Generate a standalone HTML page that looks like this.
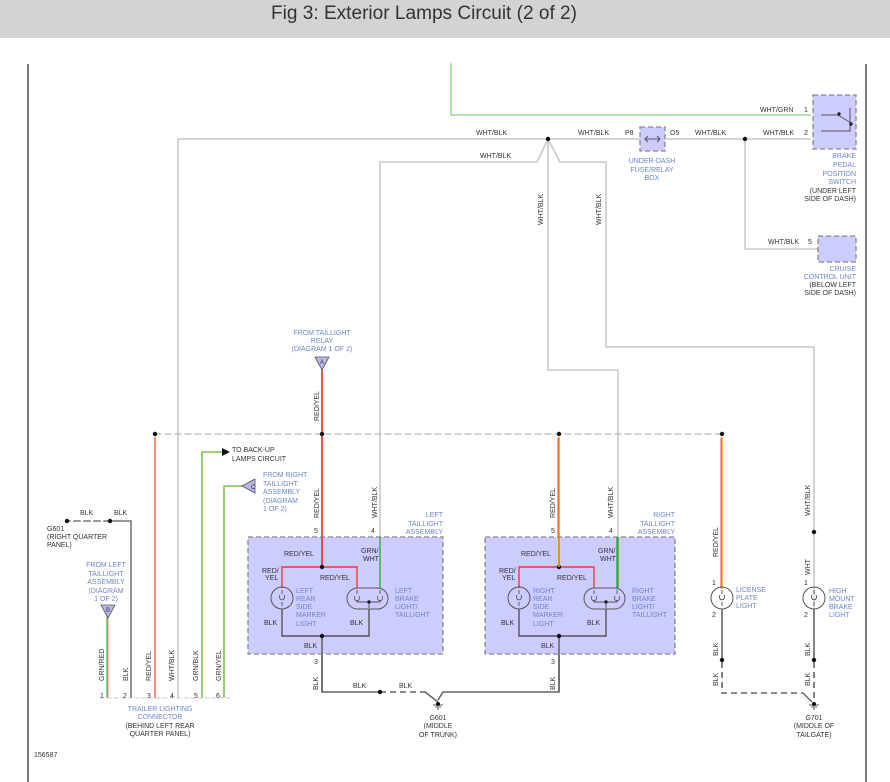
<!DOCTYPE html>
<html><head><meta charset="utf-8"><style>
html,body{margin:0;padding:0;background:#fff;width:890px;height:782px;overflow:hidden}
svg text{font-family:"Liberation Sans",sans-serif;font-size:7px}
.k{fill:#333}.b{fill:#6d86c9}
</style></head><body>
<svg width="890" height="782" viewBox="0 0 890 782" xmlns="http://www.w3.org/2000/svg">
<rect x="0" y="0" width="890" height="38" fill="#d3d3d3"/>
<text x="424" y="19" text-anchor="middle" style="font-size:19px" fill="#333" textLength="306" lengthAdjust="spacingAndGlyphs">Fig 3: Exterior Lamps Circuit (2 of 2)</text>
<line x1="28" y1="64" x2="28" y2="782" stroke="#222" stroke-width="1.2"/>
<line x1="866" y1="64" x2="866" y2="782" stroke="#222" stroke-width="1.2"/>

<g fill="none" stroke-linecap="square">
<g stroke="#c8c8c8" stroke-width="1.6">
<polyline points="178,697 178,139 810,139"/>
<polyline points="380,537 380,162 537,162 548,139 560,162 606,162 606,347 814,347 814,590"/>
<polyline points="548,139 548,370 618,370 618,537"/>
<polyline points="745,139 745,249 818,249"/>
</g>
<polyline points="451,64 451,115 810,115" stroke="#a5d890" stroke-width="1.6"/>
<line x1="155" y1="434" x2="722" y2="434" stroke="#aaa" stroke-width="1" stroke-dasharray="6,4"/>
<line x1="155" y1="438" x2="155" y2="697" stroke="#ff6a50" stroke-width="1.6"/>
<line x1="322" y1="370" x2="322" y2="537" stroke="#f22" stroke-width="1.6"/>
<line x1="559" y1="438" x2="559" y2="537" stroke="#e8a000" stroke-width="1.6"/>
<line x1="558" y1="438" x2="558" y2="537" stroke="#e22" stroke-width="0.8"/>
<line x1="722" y1="438" x2="722" y2="588" stroke="#f0b000" stroke-width="1.6"/>
<line x1="721" y1="438" x2="721" y2="588" stroke="#e22" stroke-width="0.8"/>
<polyline points="202,697 202,452 222,452" stroke="#7bc44a" stroke-width="1.6"/>
<polyline points="224,697 224,486 242,486" stroke="#7bc44a" stroke-width="1.6"/>
<line x1="107" y1="618" x2="107" y2="697" stroke="#6c6" stroke-width="1.6"/>
<line x1="108" y1="618" x2="108" y2="697" stroke="#e66" stroke-width="0.8"/>
<polyline points="131,697 131,521 110,521" stroke="#777" stroke-width="1.6"/>
<line x1="110" y1="521" x2="68" y2="521" stroke="#777" stroke-width="1.6" stroke-dasharray="6,4"/>
<line x1="100" y1="698" x2="232" y2="698" stroke="#bbb" stroke-width="0.8" stroke-dasharray="4,3"/>
<line x1="814" y1="590" x2="814" y2="612" stroke="#ddd" stroke-width="1.6"/>
</g>

<g fill="#ccccff" stroke="#888" stroke-width="1.3" stroke-dasharray="5,3">
<rect x="248" y="537" width="195" height="117"/>
<rect x="485" y="537" width="190" height="117"/>
<rect x="813" y="95" width="43" height="54"/>
<rect x="818" y="236" width="38" height="26"/>
<rect x="640" y="127" width="25" height="24"/>
</g>
<g fill="none" stroke="#555" stroke-width="1">
<polyline points="645,139 660,139"/><polyline points="648,136 645,139 648,142"/><polyline points="657,136 660,139 657,142"/>
<polyline points="850,108 850,131 821,131"/>
<polyline points="821,115 838,115 851,123"/>
</g>
<circle cx="839" cy="114" r="1.7" fill="#222"/><circle cx="851" cy="124" r="1.7" fill="#222"/>

<g id="L">
<polyline points="282,588 282,567 357,567 357,588" fill="none" stroke="#f33" stroke-width="1.4"/>
<line x1="322" y1="537" x2="322" y2="567" stroke="#f22" stroke-width="1.6"/>
<line x1="380" y1="537" x2="380" y2="588" stroke="#3a3" stroke-width="1.4"/>
<polyline points="282,609 282,636 369,636 369,609" fill="none" stroke="#555" stroke-width="1.4"/>
<line x1="322" y1="636" x2="322" y2="692" stroke="#666" stroke-width="1.6"/>
<circle cx="282" cy="598" r="11" fill="none" stroke="#555" stroke-width="1"/>
<path d="M282 590 v4 m0 8 v4 M280 595 a2.5 3 0 1 0 4 0" fill="none" stroke="#555" stroke-width="0.9"/>
<rect x="347" y="588" width="41" height="21" rx="10.5" fill="none" stroke="#555" stroke-width="1"/>
<path d="M357 590 v4 M380 590 v4 M355 596 a2.5 3 0 1 0 4 0 M378 596 a2.5 3 0 1 0 4 0 M357 600 v2 h23 v-2 M369 602 v6" fill="none" stroke="#555" stroke-width="0.9"/>
<circle cx="369" cy="602" r="1.7" fill="#222"/>
<circle cx="322" cy="567" r="2.2" fill="#111"/><circle cx="322" cy="636" r="2.2" fill="#111"/>
</g>
<use href="#L" transform="translate(237,0)"/>
<line x1="618" y1="537" x2="618" y2="588" stroke="#3a3" stroke-width="1.4"/>
<line x1="559" y1="537" x2="559" y2="567" stroke="#e8a000" stroke-width="1.6"/>

<g fill="none" stroke="#666" stroke-width="1.6">
<polyline points="322,655 322,692 380,692"/>
<polyline points="559,655 559,692 443,692 438,700"/>
<line x1="425" y1="692" x2="438" y2="702"/>
<line x1="722" y1="609" x2="722" y2="660"/>
<line x1="814" y1="609" x2="814" y2="660"/>
</g>
<g fill="none" stroke="#666" stroke-width="1.6" stroke-dasharray="6,4">
<line x1="380" y1="692" x2="428" y2="692"/>
<polyline points="722,662 722,693 803,693"/>
<line x1="814" y1="662" x2="814" y2="700"/>
</g>
<line x1="803" y1="693" x2="812" y2="702" stroke="#666" stroke-width="1.4"/>
<g stroke="#555" stroke-width="1">
<path d="M433 705h10M435 707h6M437 709h2"/><path d="M809 705h10M811 707h6M813 709h2"/>
</g>
<circle cx="438" cy="704" r="2" fill="#111"/><circle cx="814" cy="704" r="2" fill="#111"/>
<g fill="none" stroke="#555" stroke-width="1">
<circle cx="722" cy="598" r="11"/><circle cx="814" cy="598" r="11"/>
<path d="M722 590v4m0 8v4M720 595a2.5 3 0 1 0 4 0M814 590v4m0 8v4M812 595a2.5 3 0 1 0 4 0"/>
</g>
<g fill="#111">
<circle cx="548" cy="139" r="2.2"/><circle cx="745" cy="139" r="2.2"/>
<circle cx="155" cy="434" r="2.2"/><circle cx="322" cy="434" r="2.2"/><circle cx="559" cy="434" r="2.2"/><circle cx="722" cy="434" r="2.2"/>
<circle cx="814" cy="532" r="2.2"/><circle cx="722" cy="660" r="2.2"/><circle cx="814" cy="660" r="2.2"/>
<circle cx="380" cy="692" r="2.2"/><circle cx="110" cy="521" r="2.2"/><circle cx="67" cy="521" r="2.2"/>
<path d="M222 448 l8 4 -8 4z"/>
</g>
<g fill="#b8b8f0" stroke="#555" stroke-width="0.8">
<path d="M315 357h14l-7 13z"/><path d="M101 605h14l-7 13z"/><path d="M242 486l13-7v14z"/>
</g>
<text x="322" y="364" text-anchor="middle" class="k" style="font-size:6px">A</text>
<text x="108" y="612" text-anchor="middle" class="k" style="font-size:6px">B</text>
<text x="253" y="489" text-anchor="middle" class="k" style="font-size:6px">C</text>

<g class="k">
<text x="476" y="135">WHT/BLK</text><text x="480" y="158">WHT/BLK</text><text x="578" y="135">WHT/BLK</text>
<text x="625" y="135">P8</text><text x="670" y="135">O5</text><text x="695" y="135">WHT/BLK</text>
<text x="763" y="135">WHT/BLK</text><text x="804" y="135">2</text>
<text x="760" y="112">WHT/GRN</text><text x="804" y="112">1</text>
<text x="768" y="244">WHT/BLK</text><text x="808" y="244">5</text>
<text x="856" y="193" text-anchor="end">(UNDER LEFT</text><text x="856" y="201" text-anchor="end">SIDE OF DASH)</text>
<text x="856" y="287" text-anchor="end">(BELOW LEFT</text><text x="856" y="295" text-anchor="end">SIDE OF DASH)</text>
<text x="232" y="452">TO BACK-UP</text><text x="232" y="461">LAMPS CIRCUIT</text>
<text x="80" y="515">BLK</text><text x="114" y="515">BLK</text>
<text x="47" y="531">G601</text><text x="47" y="539">(RIGHT QUARTER</text><text x="47" y="547">PANEL)</text>
<text x="284" y="556">RED/YEL</text><text x="262" y="573">RED/</text><text x="265" y="580">YEL</text><text x="320" y="580">RED/YEL</text>
<text x="361" y="553">GRN/</text><text x="363" y="561">WHT</text>
<text x="264" y="625">BLK</text><text x="350" y="625">BLK</text><text x="304" y="648">BLK</text>
<text x="521" y="556">RED/YEL</text><text x="499" y="573">RED/</text><text x="502" y="580">YEL</text><text x="557" y="580">RED/YEL</text>
<text x="598" y="553">GRN/</text><text x="600" y="561">WHT</text>
<text x="501" y="625">BLK</text><text x="587" y="625">BLK</text><text x="541" y="648">BLK</text>
<text x="314" y="533">5</text><text x="371" y="533">4</text><text x="551" y="533">5</text><text x="609" y="533">4</text>
<text x="314" y="664">3</text><text x="551" y="664">3</text>
<text x="353" y="688">BLK</text><text x="399" y="688">BLK</text>
<text x="438" y="720" text-anchor="middle">G601</text><text x="438" y="728" text-anchor="middle">(MIDDLE</text><text x="438" y="737" text-anchor="middle">OF TRUNK)</text>
<text x="814" y="720" text-anchor="middle">G701</text><text x="814" y="728" text-anchor="middle">(MIDDLE OF</text><text x="814" y="737" text-anchor="middle">TAILGATE)</text>
<text x="712" y="585">1</text><text x="712" y="617">2</text><text x="804" y="585">1</text><text x="804" y="617">2</text>
<text x="100" y="698">1</text><text x="123" y="698">2</text><text x="147" y="698">3</text><text x="170" y="698">4</text><text x="194" y="698">5</text><text x="216" y="698">6</text>
<text x="160" y="728" text-anchor="middle">(BEHIND LEFT REAR</text><text x="160" y="736" text-anchor="middle">QUARTER PANEL)</text>
<text x="34" y="757">156587</text>
</g>
<g class="b">
<text x="652" y="163" text-anchor="middle">UNDER-DASH</text><text x="652" y="172" text-anchor="middle">FUSE/RELAY</text><text x="652" y="180" text-anchor="middle">BOX</text>
<text x="856" y="158" text-anchor="end">BRAKE</text><text x="856" y="167" text-anchor="end">PEDAL</text><text x="856" y="176" text-anchor="end">POSITION</text><text x="856" y="184" text-anchor="end">SWITCH</text>
<text x="856" y="271" text-anchor="end">CRUISE</text><text x="856" y="279" text-anchor="end">CONTROL UNIT</text>
<text x="322" y="335" text-anchor="middle">FROM TAILLIGHT</text><text x="322" y="343" text-anchor="middle">RELAY</text><text x="322" y="351" text-anchor="middle">(DIAGRAM 1 OF 2)</text>
<text x="263" y="477">FROM RIGHT</text><text x="263" y="486">TAILLIGHT</text><text x="263" y="494">ASSEMBLY</text><text x="263" y="503">(DIAGRAM</text><text x="263" y="511">1 OF 2)</text>
<text x="106" y="567" text-anchor="middle">FROM LEFT</text><text x="106" y="576" text-anchor="middle">TAILLIGHT</text><text x="106" y="584" text-anchor="middle">ASSEMBLY</text><text x="106" y="593" text-anchor="middle">(DIAGRAM</text><text x="106" y="601" text-anchor="middle">1 OF 2)</text>
<text x="443" y="517" text-anchor="end">LEFT</text><text x="443" y="526" text-anchor="end">TAILLIGHT</text><text x="443" y="534" text-anchor="end">ASSEMBLY</text>
<text x="675" y="517" text-anchor="end">RIGHT</text><text x="675" y="526" text-anchor="end">TAILLIGHT</text><text x="675" y="534" text-anchor="end">ASSEMBLY</text>
<text x="296" y="593">LEFT</text><text x="296" y="601">REAR</text><text x="296" y="609">SIDE</text><text x="296" y="617">MARKER</text><text x="296" y="626">LIGHT</text>
<text x="395" y="593">LEFT</text><text x="395" y="601">BRAKE</text><text x="395" y="609">LIGHT/</text><text x="395" y="617">TAILLIGHT</text>
<text x="533" y="593">RIGHT</text><text x="533" y="601">REAR</text><text x="533" y="609">SIDE</text><text x="533" y="617">MARKER</text><text x="533" y="626">LIGHT</text>
<text x="632" y="593">RIGHT</text><text x="632" y="601">BRAKE</text><text x="632" y="609">LIGHT/</text><text x="632" y="617">TAILLIGHT</text>
<text x="736" y="592">LICENSE</text><text x="736" y="600">PLATE</text><text x="736" y="608">LIGHT</text>
<text x="829" y="593">HIGH</text><text x="829" y="601">MOUNT</text><text x="829" y="609">BRAKE</text><text x="829" y="617">LIGHT</text>
<text x="160" y="711" text-anchor="middle">TRAILER LIGHTING</text><text x="160" y="719" text-anchor="middle">CONNECTOR</text>
</g>
<g class="k">
<text transform="translate(543,225) rotate(-90)">WHT/BLK</text>
<text transform="translate(601,225) rotate(-90)">WHT/BLK</text>
<text transform="translate(319,421) rotate(-90)">RED/YEL</text>
<text transform="translate(319,518) rotate(-90)">RED/YEL</text>
<text transform="translate(377,518) rotate(-90)">WHT/BLK</text>
<text transform="translate(555,518) rotate(-90)">RED/YEL</text>
<text transform="translate(613,518) rotate(-90)">WHT/BLK</text>
<text transform="translate(718,557) rotate(-90)">RED/YEL</text>
<text transform="translate(810,516) rotate(-90)">WHT/BLK</text>
<text transform="translate(810,575) rotate(-90)">WHT</text>
<text transform="translate(718,656) rotate(-90)">BLK</text><text transform="translate(810,656) rotate(-90)">BLK</text>
<text transform="translate(718,686) rotate(-90)">BLK</text><text transform="translate(810,686) rotate(-90)">BLK</text>
<text transform="translate(318,690) rotate(-90)">BLK</text><text transform="translate(555,690) rotate(-90)">BLK</text>
<text transform="translate(104,681) rotate(-90)">GRN/RED</text>
<text transform="translate(128,681) rotate(-90)">BLK</text>
<text transform="translate(151,681) rotate(-90)">RED/YEL</text>
<text transform="translate(174,681) rotate(-90)">WHT/BLK</text>
<text transform="translate(198,681) rotate(-90)">GRN/BLK</text>
<text transform="translate(221,681) rotate(-90)">GRN/YEL</text>
</g>
</svg>
</body></html>
